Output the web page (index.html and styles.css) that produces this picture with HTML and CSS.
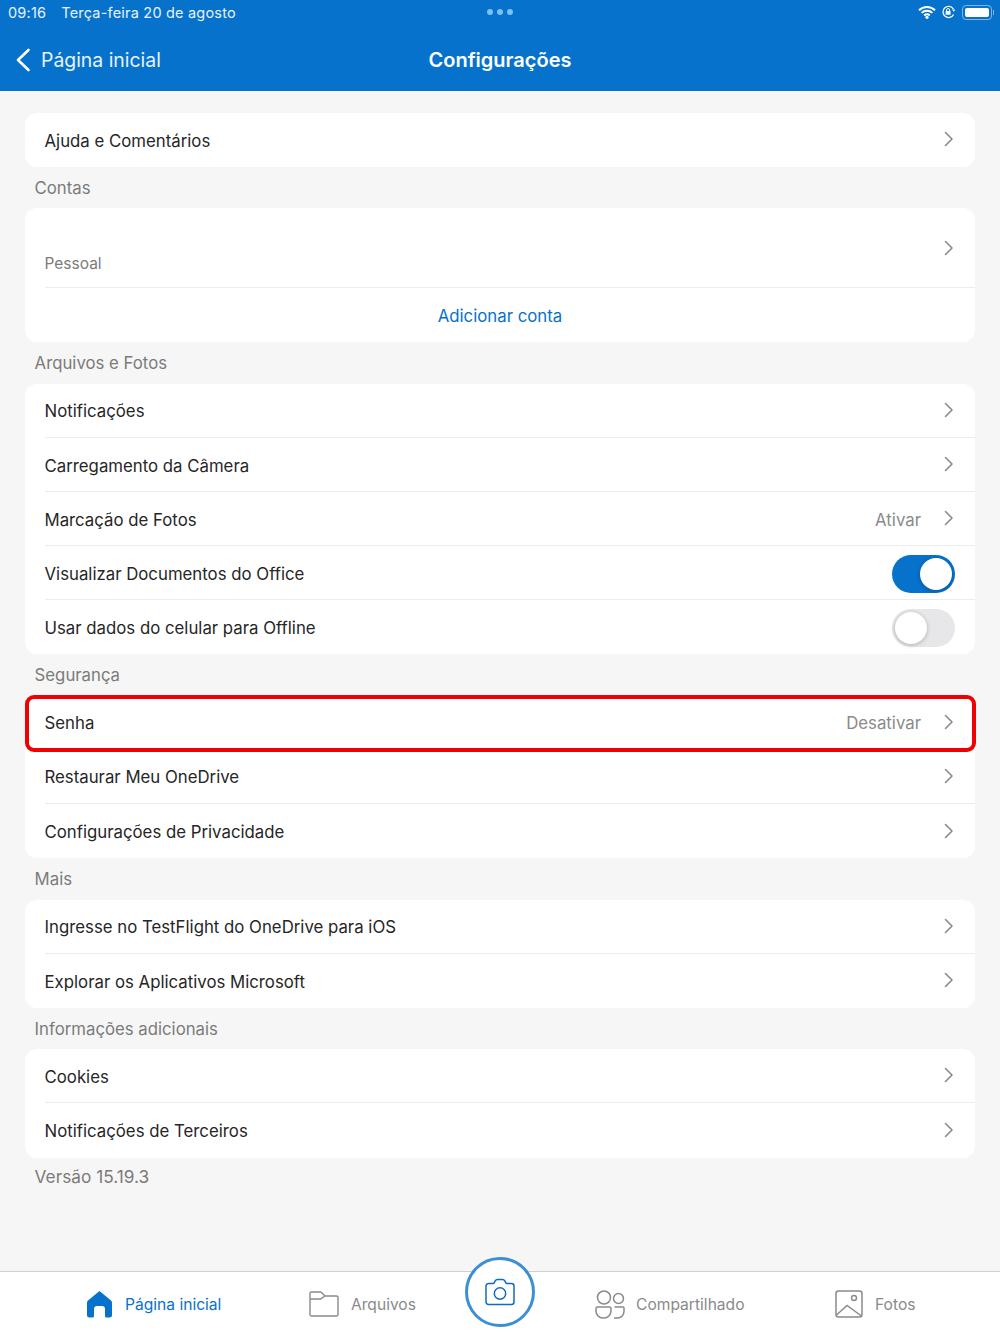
FILE: index.html
```html
<!DOCTYPE html>
<html lang="pt-BR">
<head>
    <meta charset="UTF-8">
    <title>Configurações</title>
    <link rel="stylesheet" href="styles.css">
</head>
<body>
    <header class="app-header">
        <div class="status-bar">
            <span class="status-time">09:16</span>
            <span class="status-date">Terça-feira 20 de agosto</span>
            <div class="status-dots"><i></i><i></i><i></i></div>
            <div class="status-icons">
                <svg width="18" height="14" viewBox="0 0 18 14"><path d="M1 5.2a11.5 11.5 0 0 1 16 0M3.6 7.9a7.8 7.8 0 0 1 10.8 0M6.2 10.5a4 4 0 0 1 5.6 0" fill="none" stroke="#fff" stroke-width="2"/><circle cx="9" cy="12.3" r="1.6" fill="#fff"/></svg>
                <svg width="15" height="14" viewBox="0 0 15 14"><path d="M12.6 9.5A5.6 5.6 0 1 1 12.4 4" fill="none" stroke="#fff" stroke-width="1.3"/><path d="M10.8 4.6h3.4l-1.2 2.2z" fill="#fff"/><rect x="4.6" y="6" width="5" height="3.8" rx=".6" fill="#fff"/><path d="M5.6 6V5a1.5 1.5 0 0 1 3 0v1" fill="none" stroke="#fff"/></svg>
                <div class="battery"><div class="battery-fill"></div></div>
                <div class="battery-cap"></div>
            </div>
        </div>
        <div class="nav-bar">
            <div class="nav-back">
                <svg width="16" height="24" viewBox="0 0 16 24"><path d="M13.5 2 3 12l10.500 10" fill="none" stroke="#fff" stroke-width="2.600" stroke-linecap="round" stroke-linejoin="round"/></svg>
                <span>Página inicial</span>
            </div>
            <h1 class="nav-title">Configurações</h1>
        </div>
    </header>

    <main class="settings">
        <section class="card">
            <div class="row"><span>Ajuda e Comentários</span><svg class="chevron" viewBox="0 0 10 16"><path d="M1.500 1.500 8 8l-6.500 6.500"/></svg></div>
        </section>

        <h2 class="section-label">Contas</h2>
        <section class="card">
            <div class="row row-account">
                <span class="account-name">Pessoal</span>
                <svg class="chevron" viewBox="0 0 10 16"><path d="M1.500 1.500 8 8l-6.500 6.500"/></svg>
            </div>
            <div class="row row-link"><span>Adicionar conta</span></div>
        </section>

        <h2 class="section-label">Arquivos e Fotos</h2>
        <section class="card">
            <div class="row"><span>Notificações</span><svg class="chevron" viewBox="0 0 10 16"><path d="M1.500 1.500 8 8l-6.500 6.500"/></svg></div>
            <div class="row"><span>Carregamento da Câmera</span><svg class="chevron" viewBox="0 0 10 16"><path d="M1.500 1.500 8 8l-6.500 6.500"/></svg></div>
            <div class="row"><span>Marcação de Fotos</span><span class="row-value">Ativar</span><svg class="chevron" viewBox="0 0 10 16"><path d="M1.500 1.500 8 8l-6.500 6.500"/></svg></div>
            <div class="row"><span>Visualizar Documentos do Office</span><div class="switch on"><div class="knob"></div></div></div>
            <div class="row"><span>Usar dados do celular para Offline</span><div class="switch"><div class="knob"></div></div></div>
        </section>

        <h2 class="section-label">Segurança</h2>
        <section class="card">
            <div class="row"><span>Senha</span><span class="row-value">Desativar</span><svg class="chevron" viewBox="0 0 10 16"><path d="M1.500 1.500 8 8l-6.500 6.500"/></svg><div class="highlight"></div></div>
            <div class="row"><span>Restaurar Meu OneDrive</span><svg class="chevron" viewBox="0 0 10 16"><path d="M1.500 1.500 8 8l-6.500 6.500"/></svg></div>
            <div class="row"><span>Configurações de Privacidade</span><svg class="chevron" viewBox="0 0 10 16"><path d="M1.500 1.500 8 8l-6.500 6.500"/></svg></div>
        </section>

        <h2 class="section-label">Mais</h2>
        <section class="card">
            <div class="row"><span>Ingresse no TestFlight do OneDrive para iOS</span><svg class="chevron" viewBox="0 0 10 16"><path d="M1.500 1.500 8 8l-6.500 6.500"/></svg></div>
            <div class="row"><span>Explorar os Aplicativos Microsoft</span><svg class="chevron" viewBox="0 0 10 16"><path d="M1.500 1.500 8 8l-6.500 6.500"/></svg></div>
        </section>

        <h2 class="section-label">Informações adicionais</h2>
        <section class="card">
            <div class="row"><span>Cookies</span><svg class="chevron" viewBox="0 0 10 16"><path d="M1.500 1.500 8 8l-6.500 6.500"/></svg></div>
            <div class="row"><span>Notificações de Terceiros</span><svg class="chevron" viewBox="0 0 10 16"><path d="M1.500 1.500 8 8l-6.500 6.500"/></svg></div>
        </section>

        <p class="section-label version">Versão 15.19.3</p>
    </main>

    <nav class="tab-bar">
        <div class="tab tab-home active">
            <svg width="27" height="28" viewBox="0 0 27 28"><path d="M13.500 1 25 10.500a2.500 2.500 0 0 1 1 2V25a2.500 2.500 0 0 1-2.500 2.500h-3A1.500 1.500 0 0 1 19 26v-7a3 3 0 0 0-3-3h-5a3 3 0 0 0-3 3v7a1.500 1.500 0 0 1-1.500 1.500h-3A2.500 2.500 0 0 1 1 25V12.500a2.500 2.500 0 0 1 1-2z" fill="#0672cc"/></svg>
            <span>Página inicial</span>
        </div>
        <div class="tab tab-files">
            <svg width="30" height="26" viewBox="0 0 30 26"><path d="M1 4v19.500A1.500 1.500 0 0 0 2.500 25h25a1.500 1.500 0 0 0 1.500-1.500V6.500A1.500 1.500 0 0 0 27.500 5H16l-3.500-3.500a1.500 1.500 0 0 0-1-.5H2.500A1.500 1.500 0 0 0 1 2.500zM1 8h10.500L16 5" fill="none" stroke="#8a8a8a" stroke-width="1.400"/></svg>
            <span>Arquivos</span>
        </div>
        <div class="tab tab-shared">
            <svg width="30" height="29" viewBox="0 0 30 29"><circle cx="9" cy="7.500" r="6.500" fill="none" stroke="#8a8a8a" stroke-width="1.500"/><circle cx="23.500" cy="8.500" r="5" fill="none" stroke="#8a8a8a" stroke-width="1.500"/><path d="M2.500 17h12a1.500 1.500 0 0 1 1.500 1.500V21a7 7 0 0 1-7 7H8a7 7 0 0 1-7-7v-2.500A1.500 1.500 0 0 1 2.500 17zM19.500 17h8.500a1 1 0 0 1 1 1v3.500a6.500 6.500 0 0 1-6.500 6.500H19" fill="none" stroke="#8a8a8a" stroke-width="1.500"/></svg>
            <span>Compartilhado</span>
        </div>
        <div class="tab tab-photos">
            <svg width="28" height="28" viewBox="0 0 28 28"><rect x="1" y="1" width="26" height="26" rx="2.500" fill="none" stroke="#8a8a8a" stroke-width="1.500"/><circle cx="19" cy="8" r="2.500" fill="none" stroke="#8a8a8a" stroke-width="1.400"/><path d="M1.500 25 12 15.500 26.500 26" fill="none" stroke="#8a8a8a" stroke-width="1.500"/></svg>
            <span>Fotos</span>
        </div>
        <div class="camera-button">
            <svg width="30" height="28" viewBox="0 0 30 28"><path d="M3.500 5.500H8a1.500 1.500 0 0 0 1.300-.8l1-2A2.500 2.500 0 0 1 12.500 1.500h5a2.500 2.500 0 0 1 2.200 1.200l1 2a1.500 1.500 0 0 0 1.300.8h4.500A2.500 2.500 0 0 1 29 8v16a2.500 2.500 0 0 1-2.500 2.500h-23A2.500 2.500 0 0 1 1 24V8a2.500 2.500 0 0 1 2.500-2.500z" fill="none" stroke="#0f6cbd" stroke-width="1.500"/><circle cx="15" cy="15.500" r="5.700" fill="none" stroke="#0f6cbd" stroke-width="1.500"/></svg>
        </div>
    </nav>
</body>
</html>
```

FILE: styles.css
```css
* {
    box-sizing: border-box;
}

html, body {
    margin: 0;
    height: 1333px;
    overflow: hidden;
}

body {
    display: flex;
    flex-direction: column;
    background: #f6f6f6;
    color: #262626;
    font-family: Inter, "Liberation Sans", sans-serif;
}

/* Header */
.app-header {
    height: 91px;
    flex-shrink: 0;
    background: #0672cc;
    color: #fff;
}

.status-bar {
    height: 24px;
    padding: 0 6px 0 8px;
    display: flex;
    align-items: center;
    position: relative;
    font-size: 14.5px;
    color: #e8f2fb;
    letter-spacing: 0.2px;
}

.status-time {
    margin-right: 15px;
}

.status-dots {
    position: absolute;
    left: 487px;
    top: 9px;
    display: flex;
    gap: 4px;
}

.status-dots i {
    width: 6px;
    height: 6px;
    border-radius: 50%;
    background: #7cc0f2;
}

.status-icons {
    margin-left: auto;
    display: flex;
    align-items: center;
}

.status-icons svg:first-child {
    margin-right: 5px;
}

.status-icons svg:nth-child(2) {
    margin-right: 6px;
}

.battery {
    width: 30px;
    height: 15px;
    padding: 2px;
    border: 1px solid #7fb5e6;
    border-radius: 4px;
}

.battery-fill {
    height: 100%;
    border-radius: 2px;
    background: #fff;
}

.battery-cap {
    width: 1px;
    height: 5px;
    margin-left: 1px;
    background: #7fb5e6;
}

.nav-bar {
    height: 67px;
    position: relative;
    display: flex;
    align-items: center;
    justify-content: center;
}

.nav-back {
    position: absolute;
    left: 15px;
    top: 24px;
    display: flex;
    align-items: center;
    gap: 10px;
    font-size: 19.400px;
    color: #e8f2fb;
}

.nav-title {
    margin: 5px 0 0;
    font-size: 20px;
    font-weight: 600;
}

/* Settings list */
.settings {
    flex: 1;
    padding: 21.700px 25px 0;
}

.card {
    background: #fff;
    border-radius: 12px;
}

.section-label {
    height: 41.500px;
    margin: 0;
    padding: 12px 10px 0 9.600px;
    font-size: 16.750px;
    font-weight: 400;
    line-height: 18px;
    color: #7b7b7b;
}

.version {
    padding-top: 10.500px;
    font-size: 17.250px;
}

.row {
    height: 54.100px;
    margin-left: 19.500px;
    padding: 2px 20px 0 0;
    border-bottom: 1px solid #ececec;
    display: flex;
    align-items: center;
    position: relative;
    font-size: 16.800px;
}

.row:last-child {
    border-bottom: none;
}

.row > span:first-child {
    flex: 1;
}

.row-value {
    margin-right: 23px;
    color: #8a8a8a;
}

.chevron {
    width: 10px;
    height: 16px;
    margin: -3px 1px 0 0;
    fill: none;
    stroke: #8a8a8a;
    stroke-width: 1.600;
    stroke-linecap: round;
    stroke-linejoin: round;
}

.row-account {
    height: 80px;
    padding-top: 0;
    align-items: flex-start;
}

.row-account .chevron {
    margin-top: 32px;
}

.account-name {
    margin-top: 46px;
    font-size: 15.500px;
    color: #7b7b7b;
}

.row-link {
    margin-left: 0;
    padding: 2px 0 0;
    text-align: center;
    color: #0672cc;
}

.switch {
    width: 63px;
    height: 38px;
    padding: 3px;
    border-radius: 19px;
    background: #e7e7e9;
    display: flex;
}

.switch.on {
    background: #0672cc;
    justify-content: flex-end;
}

.knob {
    width: 32px;
    height: 32px;
    border-radius: 50%;
    background: #fff;
    box-shadow: 0 1px 4px rgba(0, 0, 0, 0.25);
}

.highlight {
    position: absolute;
    left: -20px;
    right: -1px;
    top: -1px;
    bottom: -3px;
    border: 4px solid #f00000;
    border-radius: 9px;
}

/* Tab bar */
.tab-bar {
    height: 62px;
    flex-shrink: 0;
    position: relative;
    border-top: 1px solid #d0d0d0;
    background: #fff;
    font-size: 15.600px;
    color: #8a8a8a;
}

.tab {
    position: absolute;
    top: 16px;
    height: 32px;
    display: flex;
    align-items: center;
    gap: 12px;
}

.tab.active {
    color: #0672cc;
}

.tab-home { left: 86px; }
.tab-files { left: 309px; }
.tab-shared { left: 595px; gap: 11px; }
.tab-photos { left: 835px; }

.camera-button {
    position: absolute;
    left: 465px;
    top: -15px;
    width: 70px;
    height: 70px;
    border: 3px solid #3d8fd4;
    border-radius: 50%;
    background: #fff;
    display: flex;
    align-items: center;
    justify-content: center;
}
```
